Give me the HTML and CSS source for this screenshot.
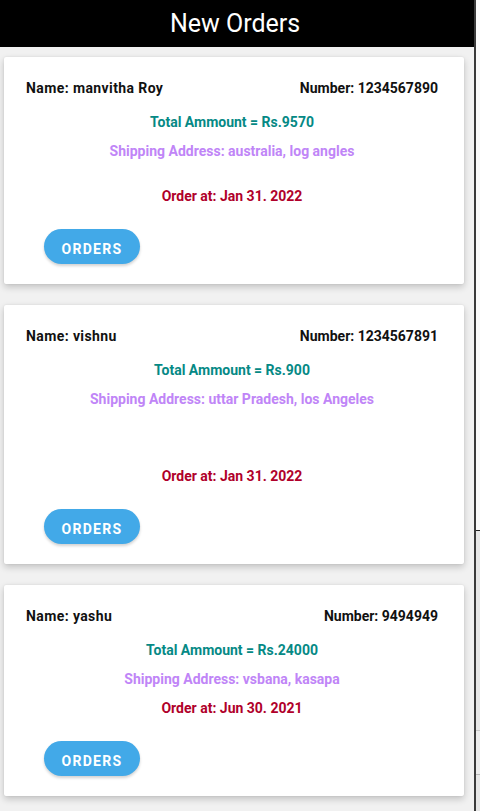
FILE: index.html
```html
<!DOCTYPE html>
<html lang="en">
<head>
<meta charset="utf-8">
<title>New Orders</title>
<link rel="stylesheet" href="styles.css">
</head>
<body>
<div class="screen">
  <main class="app">
    <header class="topbar">New Orders</header>
    <section class="list">
      <article class="card">
        <div class="row">
          <span class="name">Name: manvitha Roy</span>
          <span class="number">Number: 1234567890</span>
        </div>
        <p class="total">Total Ammount = Rs.9570</p>
        <p class="address">Shipping Address: australia, log angles</p>
        <p class="date date-mid">Order at: Jan 31. 2022</p>
        <button class="btn">ORDERS</button>
      </article>
      <article class="card">
        <div class="row">
          <span class="name">Name: vishnu</span>
          <span class="number">Number: 1234567891</span>
        </div>
        <p class="total">Total Ammount = Rs.900</p>
        <p class="address">Shipping Address: uttar Pradesh, los Angeles</p>
        <p class="date date-far">Order at: Jan 31. 2022</p>
        <button class="btn">ORDERS</button>
      </article>
      <article class="card">
        <div class="row">
          <span class="name">Name: yashu</span>
          <span class="number">Number: 9494949</span>
        </div>
        <p class="total">Total Ammount = Rs.24000</p>
        <p class="address">Shipping Address: vsbana, kasapa</p>
        <p class="date">Order at: Jun 30. 2021</p>
        <button class="btn">ORDERS</button>
      </article>
    </section>
  </main>
  <aside class="side">
    <div class="side-top"></div>
    <div class="side-bottom">
      <div class="side-band"></div>
    </div>
  </aside>
</div>
</body>
</html>
```
FILE: styles.css
```css
* { box-sizing: border-box; }
html, body {
  margin: 0;
  padding: 0;
  height: 811px;
  overflow: hidden;
  background: #ffffff;
  font-family: Roboto, "Liberation Sans", sans-serif;
}
.screen {
  display: flex;
  height: 811px;
}
.app {
  width: 474px;
  flex: none;
  background: #f1f1f1;
  display: flex;
  flex-direction: column;
}
.topbar {
  height: 47px;
  background: #000;
  color: #fff;
  font-size: 25px;
  font-weight: 400;
  line-height: 47px;
  text-align: center;
  padding-right: 4px;
}
.list {
  padding: 10px 10px 0 4px;
  display: flex;
  flex-direction: column;
  gap: 21px;
}
.card {
  background: #fff;
  border-radius: 2px;
  box-shadow: 0 3px 7px rgba(0, 0, 0, 0.2), 0 0 2px rgba(0, 0, 0, 0.08);
  padding: 21px 26px 20px 22px;
  display: flex;
  flex-direction: column;
  align-items: stretch;
}
.row {
  display: flex;
  justify-content: space-between;
  line-height: 20px;
  font-size: 14px;
  font-weight: 700;
  color: #111;
}
.name { letter-spacing: 0.4px; }
.total, .address, .date {
  margin: 9px 0 0;
  text-align: center;
  font-size: 14px;
  font-weight: 700;
  line-height: 20px;
}
.total { margin-top: 14px; color: #058985; }
.address { color: #c085f7; }
.date { color: #b0002a; }
.date-mid { margin-top: 25px; }
.date-far { margin-top: 57px; }
.btn {
  align-self: flex-start;
  margin: 23px 0 0 18px;
  width: 96px;
  height: 35px;
  border: none;
  border-radius: 18px;
  background: #42a9e8;
  color: #fff;
  font-family: Roboto, "Liberation Sans", sans-serif;
  font-size: 14px;
  font-weight: 700;
  letter-spacing: 1.3px;
  box-shadow: 0 2px 3px rgba(0, 0, 0, 0.18);
  padding: 5px 0 0;
}
.side {
  flex: 1;
  border-left: 2px solid #3a3a3a;
  display: flex;
  flex-direction: column;
}
.side-top {
  height: 531px;
  background: #fafafa;
  border-bottom: 1px solid #222;
}
.side-bottom {
  flex: 1;
  background: #e6e6e6;
  padding-top: 199px;
}
.side-band {
  height: 45px;
  border-top: 1px solid #c8c8c8;
  border-bottom: 1px solid #b8b8b8;
  background: #ececec;
}
```
